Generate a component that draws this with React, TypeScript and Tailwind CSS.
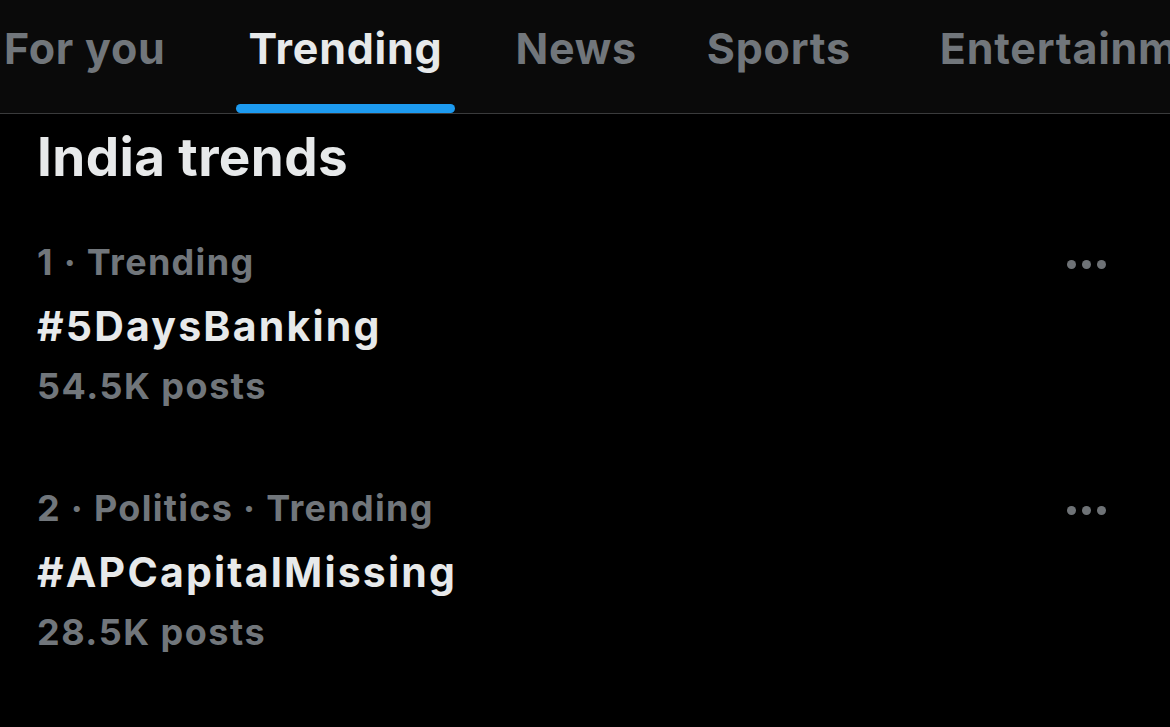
import React from 'react';

const tabs = [
  { label: 'For you', cls: 'ml-[4px]' },
  { label: 'Trending', cls: 'ml-[83px]', active: true },
  { label: 'News', cls: 'ml-[73px]' },
  { label: 'Sports', cls: 'ml-[70px]' },
  { label: 'Entertainment', cls: 'ml-[89px]' },
];

const trends = [
  { meta: '1 · Trending', tag: '#5DaysBanking', posts: '54.5K posts' },
  { meta: '2 · Politics · Trending', tag: '#APCapitalMissing', posts: '28.5K posts' },
];

function Dots() {
  return (
    <div className="flex items-center gap-[6px] pr-[64px] pt-[4px] h-[44px]">
      <span className="w-[9px] h-[9px] rounded-full bg-[#6e7276]" />
      <span className="w-[9px] h-[9px] rounded-full bg-[#6e7276]" />
      <span className="w-[9px] h-[9px] rounded-full bg-[#6e7276]" />
    </div>
  );
}

export default function App() {
  return (
    <div
      className="w-[1170px] h-[727px] overflow-hidden bg-black"
      style={{ fontFamily: 'Inter, "Noto Sans", sans-serif' }}
    >
      <div className="bg-[#0a0a0a] border-b border-[#3a3b3c] flex whitespace-nowrap overflow-hidden pt-[22px]">
        {tabs.map((t) => (
          <div key={t.label} className={`${t.cls} flex flex-col shrink-0`}>
            <span
              className={`text-[43px] leading-[52px] font-bold tracking-[0.75px] ${t.active ? 'text-[#e7e9ea]' : 'text-[#71767b]'}`}
            >
              {t.label}
            </span>
            <div className={`mt-[30px] h-[9px] -mx-[13px] rounded-full ${t.active ? 'bg-[#1d9bf0]' : 'bg-transparent'}`} />
          </div>
        ))}
      </div>

      <div className="pl-[37px]">
        <div className="mt-[11px] text-[53px] leading-[64px] font-bold tracking-[0.4px] text-[#e7e9ea]">India trends</div>

        <div className="mt-[51px] flex flex-col gap-[78px]">
          {trends.map((t) => (
            <div key={t.tag} className="flex justify-between items-start">
              <div className="flex flex-col">
                <div className="text-[36px] leading-[44px] font-bold tracking-[1.3px] text-[#71767b]">{t.meta}</div>
                <div className="mt-[18px] text-[41px] leading-[48px] font-bold tracking-[2.2px] text-[#e7e9ea]">{t.tag}</div>
                <div className="mt-[14px] text-[36px] leading-[44px] font-bold tracking-[1.5px] text-[#71767b]">{t.posts}</div>
              </div>
              <Dots />
            </div>
          ))}
        </div>
      </div>
    </div>
  );
}
